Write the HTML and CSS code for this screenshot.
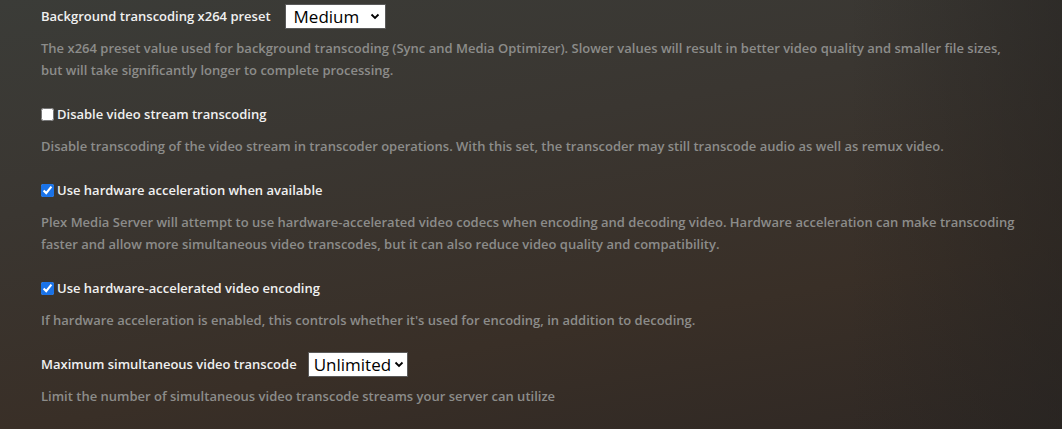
FILE: index.html
```html
<!DOCTYPE html>
<html lang="en">
<head>
    <meta charset="UTF-8">
    <title>Transcoder settings</title>
    <link rel="stylesheet" href="styles.css">
</head>
<body>
<div class="settings">
    <div class="group">
        <div class="row">
            <label class="label" for="preset">Background transcoding x264 preset</label>
            <span class="select-wrap">
                <select id="preset" class="select select-preset">
                    <option>Medium</option>
                </select>
                <svg class="chev" width="10" height="7" viewBox="0 0 10 7"><path d="M1.5 1.5 5 5l3.5-3.5" fill="none" stroke="#000" stroke-width="1.8"/></svg>
            </span>
        </div>
        <p class="desc">The x264 preset value used for background transcoding (Sync and Media Optimizer). Slower values will result in better video quality and smaller file sizes, but will take significantly longer to complete processing.</p>
    </div>

    <div class="group">
        <div class="row">
            <input type="checkbox" id="disableVideo" class="check">
            <label class="label" for="disableVideo">Disable video stream transcoding</label>
        </div>
        <p class="desc">Disable transcoding of the video stream in transcoder operations. With this set, the transcoder may still transcode audio as well as remux video.</p>
    </div>

    <div class="group">
        <div class="row">
            <input type="checkbox" id="hwAccel" class="check" checked>
            <label class="label" for="hwAccel">Use hardware acceleration when available</label>
        </div>
        <p class="desc">Plex Media Server will attempt to use hardware-accelerated video codecs when encoding and decoding video. Hardware acceleration can make transcoding faster and allow more simultaneous video transcodes, but it can also reduce video quality and compatibility.</p>
    </div>

    <div class="group">
        <div class="row">
            <input type="checkbox" id="hwEncode" class="check" checked>
            <label class="label" for="hwEncode">Use hardware-accelerated video encoding</label>
        </div>
        <p class="desc">If hardware acceleration is enabled, this controls whether it's used for encoding, in addition to decoding.</p>
    </div>

    <div class="group">
        <div class="row">
            <label class="label" for="maxTranscode">Maximum simultaneous video transcode</label>
            <span class="select-wrap select-wrap-max">
                <select id="maxTranscode" class="select select-max">
                    <option>Unlimited</option>
                </select>
                <svg class="chev" width="10" height="7" viewBox="0 0 10 7"><path d="M1.5 1.5 5 5l3.5-3.5" fill="none" stroke="#000" stroke-width="1.8"/></svg>
            </span>
        </div>
        <p class="desc">Limit the number of simultaneous video transcode streams your server can utilize</p>
    </div>
</div>
</body>
</html>
```

FILE: styles.css
```css
* {
    margin: 0;
    padding: 0;
    box-sizing: border-box;
}
html, body {
    height: 100%;
}
body {
    font-family: "Open Sans", "Noto Sans", sans-serif;
    font-size: 13px;
    font-weight: 600;
    color: #eeeeee;
    background-color: #322d29;
    background-image:
        linear-gradient(to right, rgba(38, 36, 34, 0) 80%, rgba(36, 34, 32, .55) 100%),
        linear-gradient(170deg, #3b3c38 0%, #3a3631 35%, #392f27 70%, #2f2824 100%);
    overflow: hidden;
}
.settings {
    padding: 4px 42px 0 41px;
}
.group {
    margin-bottom: 21px;
}
.row {
    display: flex;
    align-items: center;
    height: 24px;
}
.label {
    color: #f0f0f0;
    line-height: 22px;
}
.check {
    width: 13px;
    height: 13px;
    margin: 0 3px 0 0;
    accent-color: #1a73e8;
}
.select-wrap {
    position: relative;
    display: inline-block;
    margin-left: 14px;
}
.select-wrap-max {
    margin-left: 11px;
}
.select {
    appearance: none;
    -webkit-appearance: none;
    display: block;
    height: 25px;
    border: 1px solid #5a5a5a;
    border-radius: 0;
    background: #ffffff;
    color: #000000;
    font-family: "Open Sans", "Noto Sans", sans-serif;
    font-size: 17px;
    font-weight: 400;
    line-height: 23px;
    padding: 0 20px 0 8px;
}
.select-preset {
    width: 101px;
}
.select-max {
    width: 100px;
    padding: 0 12px 0 5px;
}
.select-wrap-max .chev {
    right: 4px;
}
.chev {
    position: absolute;
    right: 6px;
    top: 9px;
    pointer-events: none;
}
.desc {
    margin-top: 9px;
    color: #8c8c8a;
    line-height: 22px;
}
```
